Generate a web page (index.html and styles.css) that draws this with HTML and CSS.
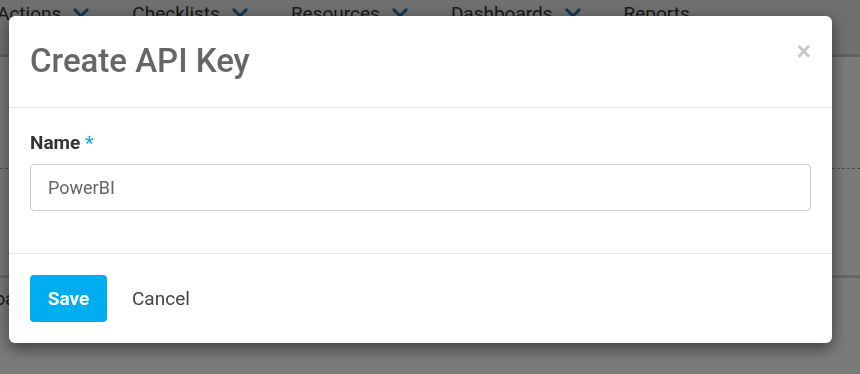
FILE: index.html
```html
<!DOCTYPE html>
<html lang="en">
<head>
<meta charset="utf-8">
<title>Create API Key</title>
<link rel="stylesheet" href="styles.css">
</head>
<body>
<div class="page">
  <nav class="topnav">
    <span class="nav-item">Actions <svg class="chev" viewBox="0 0 18 12"><path d="M2 2 L9 9 L16 2" /></svg></span>
    <span class="nav-item">Checklists <svg class="chev" viewBox="0 0 18 12"><path d="M2 2 L9 9 L16 2" /></svg></span>
    <span class="nav-item">Resources <svg class="chev" viewBox="0 0 18 12"><path d="M2 2 L9 9 L16 2" /></svg></span>
    <span class="nav-item">Dashboards <svg class="chev" viewBox="0 0 18 12"><path d="M2 2 L9 9 L16 2" /></svg></span>
    <span class="nav-item">Reports</span>
  </nav>
  <div class="content">
    <div class="dashed"></div>
    <div class="band"></div>
    <div class="under-text">Dashboard</div>
  </div>
</div>

<div class="overlay">
  <div class="modal">
    <div class="modal-header">
      <h2 class="modal-title">Create API Key</h2>
      <button class="close" type="button">&times;</button>
    </div>
    <div class="modal-body">
      <label class="field-label">Name <span class="req">*</span></label>
      <div class="input">PowerBI</div>
    </div>
    <div class="modal-footer">
      <button class="btn-save" type="button">Save</button>
      <button class="btn-cancel" type="button">Cancel</button>
    </div>
  </div>
</div>
</body>
</html>
```

FILE: styles.css
```css
* { box-sizing: border-box; }
html, body {
  margin: 0;
  padding: 0;
  width: 860px;
  height: 374px;
  overflow: hidden;
  font-family: Roboto, "Liberation Sans", sans-serif;
}
.page {
  background: #f4f4f4;
  height: 374px;
}
.topnav {
  display: flex;
  align-items: center;
  gap: 42px;
  height: 57px;
  padding: 0 0 28px 0;
  margin-left: -3px;
  background: #dedede;
  border-bottom: 3px solid #c4c4c4;
}
.nav-item {
  display: flex;
  align-items: center;
  gap: 11px;
  font-size: 19px;
  color: #333;
}
.chev {
  width: 18px;
  height: 12px;
  fill: none;
  stroke: #1a6fa8;
  stroke-width: 3;
}
.content {
  display: flex;
  flex-direction: column;
}
.dashed {
  margin-top: 111px;
  border-top: 1px dashed #9a9a9a;
}
.band {
  margin-top: 106px;
  border-top: 3px solid #cfcfcf;
}
.under-text {
  margin-top: 10px;
  margin-left: -56px;
  font-size: 18px;
  color: #333;
}
.overlay {
  position: fixed;
  inset: 0;
  background: rgba(0, 0, 0, 0.5);
  padding: 16px 0 0 9px;
}
.modal {
  width: 823px;
  height: 327px;
  background: #fff;
  border-radius: 6px;
  box-shadow: 0 5px 15px rgba(0, 0, 0, 0.5);
  display: flex;
  flex-direction: column;
}
.modal-header {
  height: 92px;
  border-bottom: 1px solid #e5e5e5;
  display: flex;
  justify-content: space-between;
  align-items: flex-start;
  padding: 0 21px 0 21px;
}
.modal-title {
  margin: 25px 0 0 0;
  font-size: 33px;
  font-weight: 500;
  color: #666;
  line-height: 40px;
}
.close {
  margin-top: 24px;
  border: 0;
  background: none;
  padding: 0;
  font-family: "Liberation Sans", sans-serif;
  font-size: 25px;
  font-weight: bold;
  color: #c8c8c8;
  line-height: 22px;
}
.modal-body {
  height: 146px;
  border-bottom: 1px solid #e5e5e5;
  padding: 23px 21px 0 21px;
  display: flex;
  flex-direction: column;
}
.field-label {
  font-size: 19px;
  font-weight: 700;
  color: #333;
  line-height: 24px;
}
.req {
  color: #1fa9d6;
}
.input {
  margin-top: 9px;
  height: 47px;
  border: 1px solid #ccc;
  border-radius: 4px;
  padding: 0 17px;
  display: flex;
  align-items: center;
  font-size: 18px;
  color: #666;
}
.modal-footer {
  flex: 1;
  display: flex;
  align-items: center;
  gap: 25px;
  padding: 0 21px 0 21px;
}
.btn-save {
  width: 77px;
  height: 47px;
  border: 0;
  border-radius: 4px;
  background: #00aeef;
  color: #fff;
  font-family: Roboto, "Liberation Sans", sans-serif;
  font-size: 19px;
  font-weight: 700;
}
.btn-cancel {
  border: 0;
  background: none;
  padding: 0;
  font-family: Roboto, "Liberation Sans", sans-serif;
  font-size: 19px;
  color: #444;
}
```
